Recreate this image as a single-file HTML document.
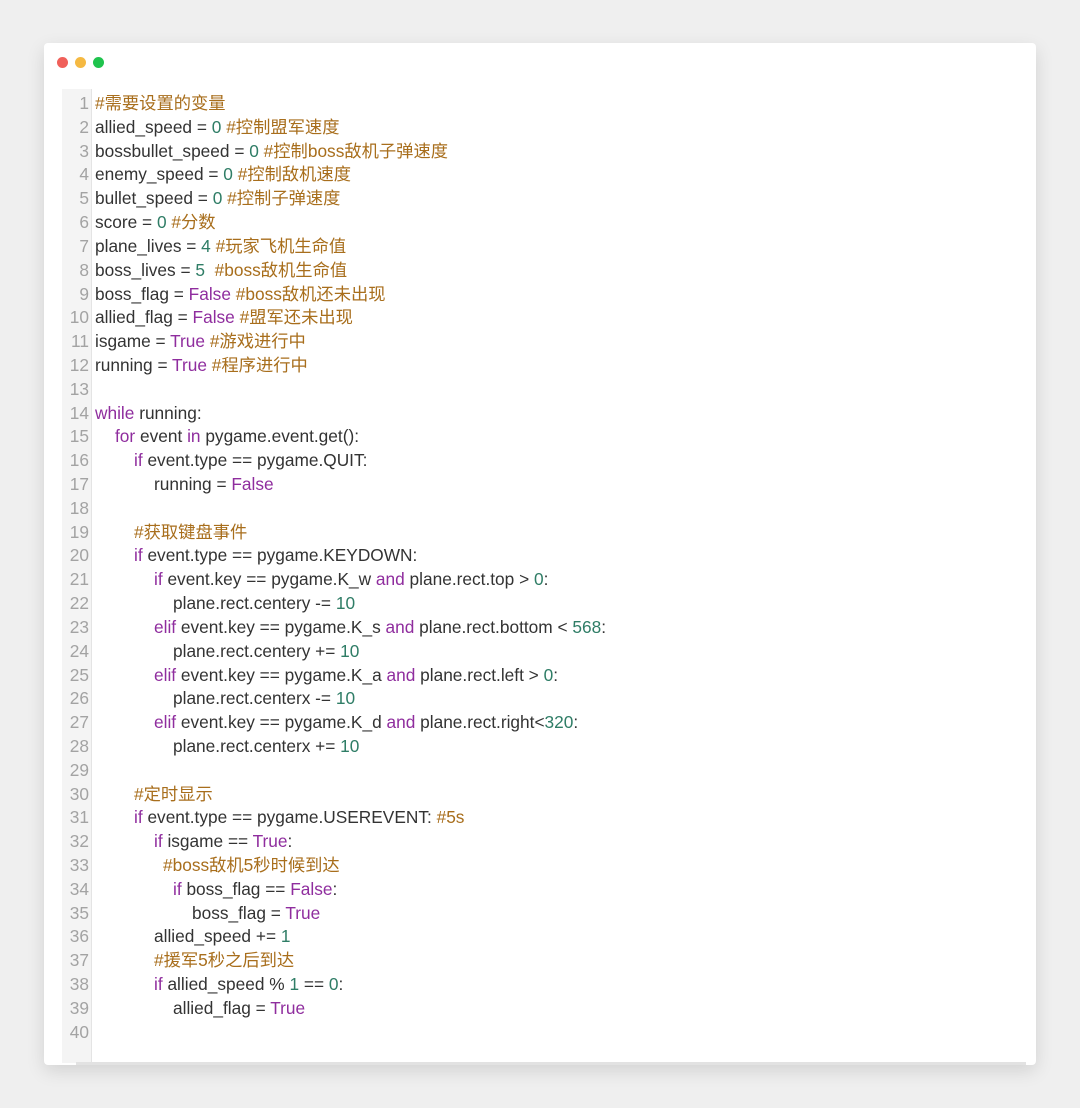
<!DOCTYPE html>
<html><head><meta charset="utf-8"><style>
html,body{margin:0;padding:0;}
body{width:1080px;height:1108px;background:#efefef;position:relative;overflow:hidden;font-family:"Liberation Sans","Noto Sans CJK SC",sans-serif;}
.card{position:absolute;left:44px;top:43px;width:992px;height:1022px;background:#fff;border-radius:4px;box-shadow:0 6px 18px rgba(0,0,0,0.12);}
.dot{position:absolute;top:14px;width:11px;height:11px;border-radius:50%;}
.gut{position:absolute;left:18px;top:46px;width:29px;height:974px;background:#f4f4f4;border-right:1px solid #e4e4e4;}
.code{position:absolute;left:0;top:49px;width:992px;}
.l{height:23.82px;line-height:23.82px;font-size:17.3px;letter-spacing:0;color:#333;white-space:pre;position:relative;}
.n{position:absolute;left:14px;width:31px;text-align:right;color:#a3a3a3;}
.t{position:absolute;left:51px;}
.c{color:#a86e1c}.k{color:#8f2d9e}.d{color:#2f7d66}
.bar{position:absolute;left:32px;right:10px;bottom:0;height:3px;background:#e2e2e2;}
</style></head><body>
<div class="card">
<div class="dot" style="left:13px;background:#f0605a"></div>
<div class="dot" style="left:31px;background:#f5b942"></div>
<div class="dot" style="left:49px;background:#1fc34d"></div>
<div class="gut"></div>
<div class="code">
<div class="l"><span class="n">1</span><span class="t"><span class="c">#需要设置的变量</span></span></div>
<div class="l"><span class="n">2</span><span class="t">allied_speed = <span class="d">0</span> <span class="c">#控制盟军速度</span></span></div>
<div class="l"><span class="n">3</span><span class="t">bossbullet_speed = <span class="d">0</span> <span class="c">#控制boss敌机子弹速度</span></span></div>
<div class="l"><span class="n">4</span><span class="t">enemy_speed = <span class="d">0</span> <span class="c">#控制敌机速度</span></span></div>
<div class="l"><span class="n">5</span><span class="t">bullet_speed = <span class="d">0</span> <span class="c">#控制子弹速度</span></span></div>
<div class="l"><span class="n">6</span><span class="t">score = <span class="d">0</span> <span class="c">#分数</span></span></div>
<div class="l"><span class="n">7</span><span class="t">plane_lives = <span class="d">4</span> <span class="c">#玩家飞机生命值</span></span></div>
<div class="l"><span class="n">8</span><span class="t">boss_lives = <span class="d">5</span>  <span class="c">#boss敌机生命值</span></span></div>
<div class="l"><span class="n">9</span><span class="t">boss_flag = <span class="k">False</span> <span class="c">#boss敌机还未出现</span></span></div>
<div class="l"><span class="n">10</span><span class="t">allied_flag = <span class="k">False</span> <span class="c">#盟军还未出现</span></span></div>
<div class="l"><span class="n">11</span><span class="t">isgame = <span class="k">True</span> <span class="c">#游戏进行中</span></span></div>
<div class="l"><span class="n">12</span><span class="t">running = <span class="k">True</span> <span class="c">#程序进行中</span></span></div>
<div class="l"><span class="n">13</span><span class="t"></span></div>
<div class="l"><span class="n">14</span><span class="t"><span class="k">while</span> running:</span></div>
<div class="l"><span class="n">15</span><span class="t" style="left:71px"><span class="k">for</span> event <span class="k">in</span> pygame.event.get():</span></div>
<div class="l"><span class="n">16</span><span class="t" style="left:90px"><span class="k">if</span> event.type == pygame.QUIT:</span></div>
<div class="l"><span class="n">17</span><span class="t" style="left:110px">running = <span class="k">False</span></span></div>
<div class="l"><span class="n">18</span><span class="t"></span></div>
<div class="l"><span class="n">19</span><span class="t" style="left:90px"><span class="c">#获取键盘事件</span></span></div>
<div class="l"><span class="n">20</span><span class="t" style="left:90px"><span class="k">if</span> event.type == pygame.KEYDOWN:</span></div>
<div class="l"><span class="n">21</span><span class="t" style="left:110px"><span class="k">if</span> event.key == pygame.K_w <span class="k">and</span> plane.rect.top &gt; <span class="d">0</span>:</span></div>
<div class="l"><span class="n">22</span><span class="t" style="left:129px">plane.rect.centery -= <span class="d">10</span></span></div>
<div class="l"><span class="n">23</span><span class="t" style="left:110px"><span class="k">elif</span> event.key == pygame.K_s <span class="k">and</span> plane.rect.bottom &lt; <span class="d">568</span>:</span></div>
<div class="l"><span class="n">24</span><span class="t" style="left:129px">plane.rect.centery += <span class="d">10</span></span></div>
<div class="l"><span class="n">25</span><span class="t" style="left:110px"><span class="k">elif</span> event.key == pygame.K_a <span class="k">and</span> plane.rect.left &gt; <span class="d">0</span>:</span></div>
<div class="l"><span class="n">26</span><span class="t" style="left:129px">plane.rect.centerx -= <span class="d">10</span></span></div>
<div class="l"><span class="n">27</span><span class="t" style="left:110px"><span class="k">elif</span> event.key == pygame.K_d <span class="k">and</span> plane.rect.right&lt;<span class="d">320</span>:</span></div>
<div class="l"><span class="n">28</span><span class="t" style="left:129px">plane.rect.centerx += <span class="d">10</span></span></div>
<div class="l"><span class="n">29</span><span class="t"></span></div>
<div class="l"><span class="n">30</span><span class="t" style="left:90px"><span class="c">#定时显示</span></span></div>
<div class="l"><span class="n">31</span><span class="t" style="left:90px"><span class="k">if</span> event.type == pygame.USEREVENT: <span class="c">#5s</span></span></div>
<div class="l"><span class="n">32</span><span class="t" style="left:110px"><span class="k">if</span> isgame == <span class="k">True</span>:</span></div>
<div class="l"><span class="n">33</span><span class="t" style="left:119px"><span class="c">#boss敌机5秒时候到达</span></span></div>
<div class="l"><span class="n">34</span><span class="t" style="left:129px"><span class="k">if</span> boss_flag == <span class="k">False</span>:</span></div>
<div class="l"><span class="n">35</span><span class="t" style="left:148px">boss_flag = <span class="k">True</span></span></div>
<div class="l"><span class="n">36</span><span class="t" style="left:110px">allied_speed += <span class="d">1</span></span></div>
<div class="l"><span class="n">37</span><span class="t" style="left:110px"><span class="c">#援军5秒之后到达</span></span></div>
<div class="l"><span class="n">38</span><span class="t" style="left:110px"><span class="k">if</span> allied_speed % <span class="d">1</span> == <span class="d">0</span>:</span></div>
<div class="l"><span class="n">39</span><span class="t" style="left:129px">allied_flag = <span class="k">True</span></span></div>
<div class="l"><span class="n">40</span><span class="t"></span></div>
</div>
<div class="bar"></div>
</div>
</body></html>
